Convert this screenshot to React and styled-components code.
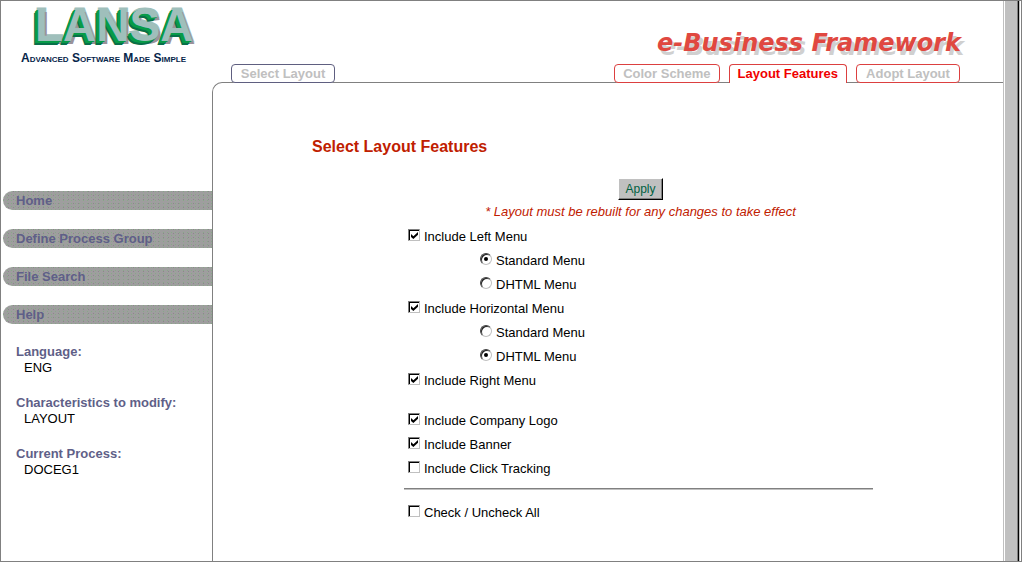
import React, { useState } from 'react';
import styled, { createGlobalStyle, css } from 'styled-components';

const GlobalStyle = createGlobalStyle`
  *, *::before, *::after { box-sizing: border-box; }
  body {
    margin: 0;
    background: #fff;
    color: #000;
    font: 13px/16px "Liberation Sans", Arial, sans-serif;
  }
`;

const Frame = styled.div`
  display: flex;
  min-height: 100vh;
  border: 1px solid #808080;
`;

const Page = styled.div`
  flex: 1;
  min-width: 0;
  display: flex;
`;

const Sidebar = styled.aside`
  flex: 0 0 211px;
  min-width: 0;
  display: flex;
  flex-direction: column;
`;

const Brand = styled.div`
  height: 190px;
  padding-left: 20px;
`;

const BrandName = styled.div`
  padding-left: 14px;
  font-size: 46px;
  line-height: 48px;
  font-weight: bold;
  color: #9fbfbb;
  -webkit-text-stroke: 3px #9fbfbb;
  paint-order: stroke fill;
  text-shadow:
    -1px 1px 0 #079b48, -2px 1px 0 #079b48, -3px 2px 0 #079b48,
    -3px 3px 0 #087049, -4px 4px 0 #087049, 2px 3px 0 #9b9299;
`;

const Tagline = styled.div`
  font-size: 12px;
  line-height: 18px;
  font-weight: bold;
  font-variant: small-caps;
  white-space: nowrap;
  color: #06254a;
`;

const Nav = styled.nav`
  display: flex;
  flex-direction: column;
  gap: 19px;
  padding-left: 2px;
`;

const NavLink = styled.a`
  padding-left: 13px;
  border-radius: 10px 0 0 10px;
  background-color: #9e9e9e;
  background-image:
    conic-gradient(from 0deg at 1px 1px, transparent 75%, #88a888 0),
    conic-gradient(from 0deg at 1px 1px, transparent 75%, #8e868e 0);
  background-size: 4px 3px, 5px 4px;
  color: #5f5f88;
  font-weight: bold;
  line-height: 19px;
  text-decoration: none;
`;

const Details = styled.dl`
  display: flex;
  flex-direction: column;
  gap: 19px;
  margin: 0;
  padding: 20px 0 0 15px;
`;

const Term = styled.dt`
  color: #5f5f88;
  font-weight: bold;
`;

const Value = styled.dd`
  margin: 0 0 0 8px;
`;

const Main = styled.main`
  flex: 1;
  min-width: 0;
  display: flex;
  flex-direction: column;
`;

const Banner = styled.div`
  height: 63px;
  padding: 28px 42px 0 0;
  text-align: right;
  font-family: "DejaVu Sans", sans-serif;
  font-size: 24px;
  line-height: 28px;
  font-weight: bold;
  font-style: italic;
  color: #e04840;
  text-shadow: 3px 4px 0 #d0d0d0;
`;

const TabBar = styled.nav`
  position: relative;
  display: flex;
  gap: 9px;
  margin-bottom: -1px;
  padding: 0 43px 0 19px;
`;

const tabColor = { plain: '#5f5f80', red: '#dc4040' };

const Tab = styled.a`
  min-width: 104px;
  height: 19px;
  padding: 0 8px;
  border: 1px solid ${(p) => tabColor[p.$tone]};
  border-radius: 4px;
  background: #fff;
  color: #c0c0c0;
  font-weight: bold;
  line-height: 17px;
  text-align: center;
  text-decoration: none;
  white-space: nowrap;
  ${(p) => p.$push && css`margin-left: auto;`}
  ${(p) => p.$active && css`
    border-bottom: 0;
    border-radius: 4px 4px 0 0;
    color: #f00000;
  `}
`;

const Panel = styled.section`
  flex: 1;
  padding: 54px 130px 20px 99px;
  border: 1px solid #808080;
  border-width: 1px 0 0 1px;
  border-top-left-radius: 10px;
`;

const Title = styled.h1`
  margin: 0;
  color: #bf2000;
  font-size: 16px;
  line-height: 20px;
`;

const Form = styled.form`
  margin: 21px 0 0 92px;
`;

const Actions = styled.div`
  display: flex;
  flex-direction: column;
  align-items: center;
  gap: 4px;
  padding: 0 0 4px 4px;
`;

const ApplyButton = styled.button`
  height: 22px;
  padding: 0 6px;
  border: 1px solid #000;
  border-color: #fff #000 #000 #fff;
  background: #c0c0c0;
  box-shadow: inset -1px -1px 0 #808080;
  color: #006040;
  font: 12px/18px "Liberation Sans", Arial, sans-serif;
`;

const Note = styled.p`
  margin: 0;
  color: #bf2000;
  font-style: italic;
`;

const Options = styled.div`
  display: flex;
  flex-direction: column;
  ${(p) => p.$spaced && css`margin-top: 16px;`}
`;

const Option = styled.label`
  display: flex;
  align-items: flex-start;
  gap: 4px;
  height: 24px;
  padding-left: ${(p) => (p.$nested ? 76 : 4)}px;
  line-height: 26px;
`;

const Check = styled.input`
  appearance: none;
  flex: none;
  position: relative;
  width: 12px;
  height: 12px;
  margin: 5px 0 0;
  border: 1px solid;
  border-color: #808080 #c0c0c0 #c0c0c0 #808080;
  background: #fff;
  box-shadow: inset 1px 1px 0 #000;

  &:checked::before {
    content: '';
    position: absolute;
    inset: 2px 1px 1px 2px;
    background: #000;
    clip-path: polygon(0 28%, 34% 60%, 100% 0, 100% 40%, 34% 100%, 0 70%);
  }
`;

const Radio = styled.input`
  appearance: none;
  flex: none;
  position: relative;
  width: 12px;
  height: 12px;
  margin: 5px 0 0;
  border: 1px solid;
  border-color: #404040 #c0c0c0 #c0c0c0 #404040;
  border-radius: 50%;
  background: #fff;
  box-shadow: inset 1px 1px 0 #202020;

  &:checked::before {
    content: '';
    position: absolute;
    inset: 3px;
    border-radius: 50%;
    background: #000;
  }
`;

const Rule = styled.hr`
  height: 2px;
  margin: 8px 0 10px;
  border: 0;
  border-top: 1px solid #808080;
  background: #c0c0c0;
`;

const ScrollTrack = styled.div`
  flex: 0 0 18px;
  padding: 0 3px 0 1px;
  border-left: 1px solid #c0c0c0;
  display: flex;
`;

const ScrollThumb = styled.div`
  flex: 1;
  background: #c0c0c0;
  border-right: 1px solid #808080;
  box-shadow: 1px 0 0 #000, 2px 0 0 #c0c0c0;
`;

const links = ['Home', 'Define Process Group', 'File Search', 'Help'];

const details = [
  ['Language:', 'ENG'],
  ['Characteristics to modify:', 'LAYOUT'],
  ['Current Process:', 'DOCEG1'],
];

function CheckOption({ label, checked, onChange }) {
  return (
    <Option>
      <Check type="checkbox" checked={checked} onChange={(e) => onChange(e.target.checked)} />
      <span>{label}</span>
    </Option>
  );
}

function MenuStyle({ name, value, onChange }) {
  return ['Standard', 'DHTML'].map((kind) => (
    <Option key={kind} $nested>
      <Radio type="radio" name={name} checked={value === kind} onChange={() => onChange(kind)} />
      <span>{kind} Menu</span>
    </Option>
  ));
}

export default function App() {
  const [flags, setFlags] = useState({
    left: true, horizontal: true, right: true, logo: true, banner: true, tracking: false,
  });
  const [leftStyle, setLeftStyle] = useState('Standard');
  const [horizontalStyle, setHorizontalStyle] = useState('DHTML');
  const bind = (key) => ({
    checked: flags[key],
    onChange: (on) => setFlags({ ...flags, [key]: on }),
  });
  const setAll = (on) =>
    setFlags(Object.fromEntries(Object.keys(flags).map((key) => [key, on])));

  return (
    <>
      <GlobalStyle />
      <Frame>
        <Page>
          <Sidebar>
            <Brand>
              <BrandName>LANSA</BrandName>
              <Tagline>Advanced Software Made Simple</Tagline>
            </Brand>
            <Nav>
              {links.map((text) => <NavLink key={text} href="#">{text}</NavLink>)}
            </Nav>
            <Details>
              {details.map(([term, value]) => (
                <div key={term}>
                  <Term>{term}</Term>
                  <Value>{value}</Value>
                </div>
              ))}
            </Details>
          </Sidebar>
          <Main>
            <Banner>e-Business Framework</Banner>
            <TabBar>
              <Tab href="#" $tone="plain">Select Layout</Tab>
              <Tab href="#" $tone="red" $push>Color Scheme</Tab>
              <Tab href="#" $tone="red" $active>Layout Features</Tab>
              <Tab href="#" $tone="red">Adopt Layout</Tab>
            </TabBar>
            <Panel>
              <Title>Select Layout Features</Title>
              <Form onSubmit={(e) => e.preventDefault()}>
                <Actions>
                  <ApplyButton type="submit">Apply</ApplyButton>
                  <Note>* Layout must be rebuilt for any changes to take effect</Note>
                </Actions>
                <Options>
                  <CheckOption label="Include Left Menu" {...bind('left')} />
                  <MenuStyle name="left-style" value={leftStyle} onChange={setLeftStyle} />
                  <CheckOption label="Include Horizontal Menu" {...bind('horizontal')} />
                  <MenuStyle name="horizontal-style" value={horizontalStyle} onChange={setHorizontalStyle} />
                  <CheckOption label="Include Right Menu" {...bind('right')} />
                </Options>
                <Options $spaced>
                  <CheckOption label="Include Company Logo" {...bind('logo')} />
                  <CheckOption label="Include Banner" {...bind('banner')} />
                  <CheckOption label="Include Click Tracking" {...bind('tracking')} />
                </Options>
                <Rule />
                <CheckOption
                  label="Check / Uncheck All"
                  checked={Object.values(flags).every(Boolean)}
                  onChange={setAll}
                />
              </Form>
            </Panel>
          </Main>
        </Page>
        <ScrollTrack>
          <ScrollThumb />
        </ScrollTrack>
      </Frame>
    </>
  );
}
